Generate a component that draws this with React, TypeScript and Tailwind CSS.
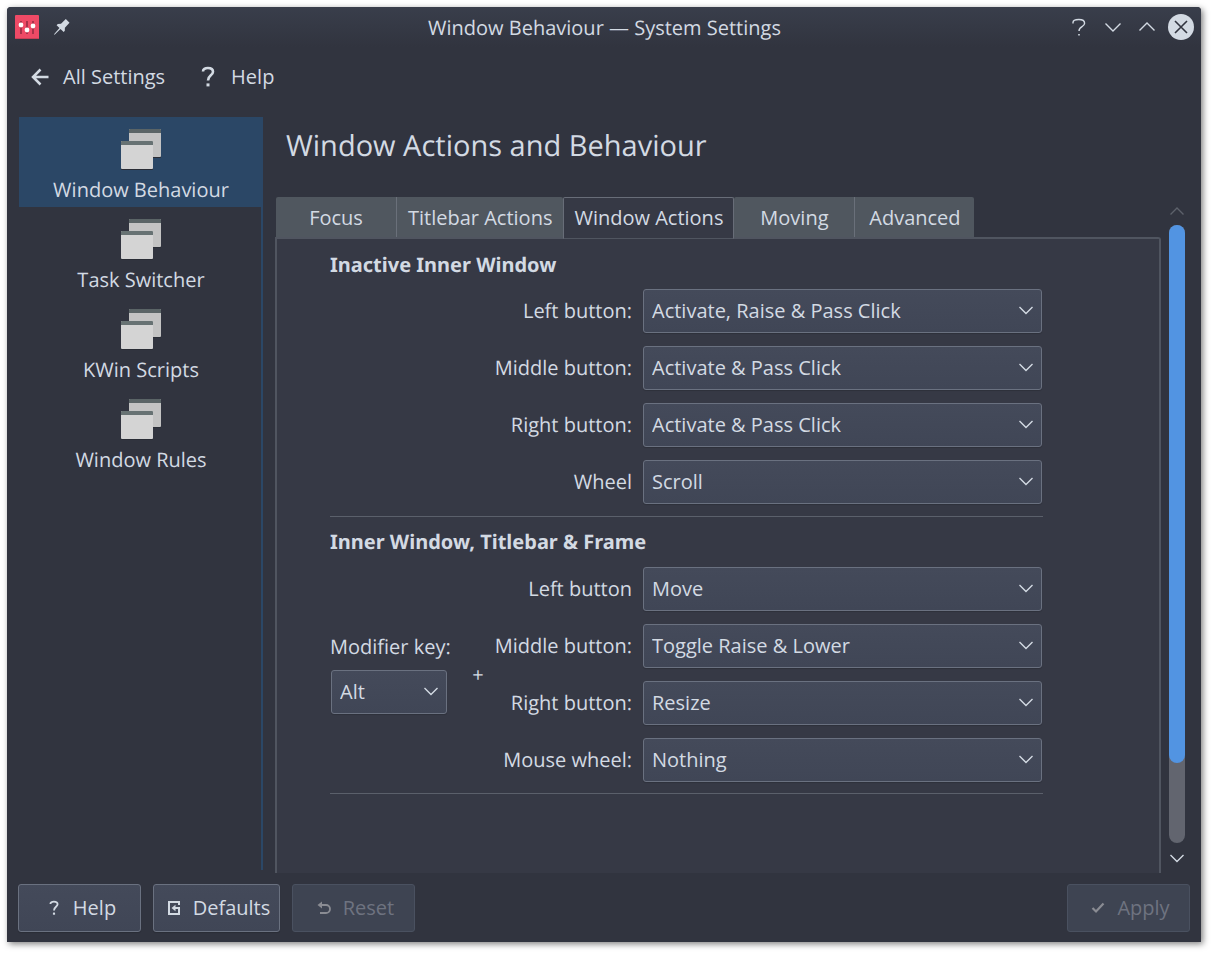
import React, { useId } from "react";

type IconProps = { className?: string };

function AppIcon() {
  return (
    <svg width="24" height="24" viewBox="0 0 24 24" aria-hidden="true">
      <rect width="24" height="24" rx="1" fill="#ee4a66" />
      <rect y="23" width="24" height="1" fill="#c93f57" />
      <g fill="#a8324a">
        <rect x="5" y="6" width="2" height="13" />
        <rect x="11" y="6" width="2" height="13" />
        <rect x="17" y="6" width="2" height="13" />
      </g>
      <g fill="#ffffff">
        <circle cx="6" cy="10" r="2.4" />
        <circle cx="12" cy="15" r="2.4" />
        <circle cx="18" cy="11" r="2.4" />
      </g>
    </svg>
  );
}

function PinIcon() {
  return (
    <svg width="16" height="16" viewBox="0 0 16 16" fill="#d3dae3" aria-hidden="true">
      <path d="M11.8 0 15.5 3.7 10.9 8.8 10.8 11.8 9.7 13 6.5 9.9 0.6 15.8 0 15.2 5.5 9 2.6 6.2 3.8 5 7 4.8Z" />
    </svg>
  );
}

function HelpGlyph({ className }: IconProps) {
  return (
    <svg width="16" height="20" viewBox="0 0 16 20" fill="none" stroke="currentColor" className={className} aria-hidden="true">
      <path d="M2 6.5V5.5C2 3.5 4.3 2.5 7.8 2.5S13.6 3.5 13.6 6.2C13.6 10 8 9.2 8 14" strokeWidth="1.4" />
      <path d="M8 17v1.4" strokeWidth="1.6" />
    </svg>
  );
}

function BoldHelp({ small = false }: { small?: boolean }) {
  return (
    <svg width={small ? 10 : 14} height={small ? 16 : 22} viewBox="0 0 14 22" fill="none" stroke="currentColor" aria-hidden="true">
      <path d="M2 5.4C2 3.2 4 2 6.9 2S12 3.4 12 5.8C12 9.4 7 9.4 7 14.4" strokeWidth="2.6" />
      <path d="M7 17.4v3" strokeWidth="3" />
    </svg>
  );
}

function BackArrow() {
  return (
    <svg width="18" height="18" viewBox="0 0 18 18" fill="none" stroke="currentColor" strokeWidth="2.5" aria-hidden="true">
      <path d="M17.5 9H2.5M9.5 1.5 2 9 9.5 16.5" />
    </svg>
  );
}

function Chevron({ up = false, className }: IconProps & { up?: boolean }) {
  return (
    <svg width="16" height="10" viewBox="0 0 16 10" fill="none" stroke="currentColor" strokeWidth="1.4" className={className} aria-hidden="true">
      <path d={up ? "M0.5 8.5 8 1 15.5 8.5" : "M0.5 1.5 8 9 15.5 1.5"} />
    </svg>
  );
}

function SmallChevron({ up = false, className }: IconProps & { up?: boolean }) {
  return (
    <svg width="14" height="9" viewBox="0 0 14 9" fill="none" stroke="currentColor" strokeWidth="1.4" className={className} aria-hidden="true">
      <path d={up ? "M0.5 7.5 7 1 13.5 7.5" : "M0.5 1 7 7.5 13.5 1"} />
    </svg>
  );
}

function WindowsIcon() {
  return (
    <svg width="40" height="41" viewBox="0 0 40 41" aria-hidden="true">
      <rect x="8" y="1" width="32" height="28" rx="1" fill="#2a2d36" />
      <rect x="8" y="0" width="32" height="28" rx="1" fill="#c3c3c3" />
      <path d="M8 4V1a1 1 0 0 1 1-1h30a1 1 0 0 1 1 1v3z" fill="#5a6466" />
      <rect x="0" y="13" width="32" height="28" rx="1" fill="#2a2d36" />
      <rect x="0" y="12" width="32" height="28" rx="1" fill="#d4d4d4" />
      <path d="M0 16v-3a1 1 0 0 1 1-1h30a1 1 0 0 1 1 1v3z" fill="#677273" />
    </svg>
  );
}

function DefaultsIcon() {
  return (
    <svg width="14" height="16" viewBox="0 0 14 16" fill="none" stroke="currentColor" strokeWidth="2" aria-hidden="true">
      <path d="M12 5V2H2v12h10V8H8" />
      <path d="M4.5 8 8.5 4.8V11.2Z" fill="currentColor" stroke="none" />
    </svg>
  );
}

function ResetIcon() {
  return (
    <svg width="14" height="14" viewBox="0 0 14 14" fill="none" stroke="#8a8c93" strokeWidth="1.8" aria-hidden="true">
      <path d="M3 4H9A4 4 0 0 1 9 12H3" />
      <path d="M0.5 4 5 0.5V7.5Z" fill="#8a8c93" stroke="none" />
    </svg>
  );
}

function CheckIcon() {
  return (
    <svg width="14" height="12" viewBox="0 0 14 12" fill="none" stroke="#8a8c93" strokeWidth="2.2" aria-hidden="true">
      <path d="M1.5 6 5 9.5 12.5 1.5" />
    </svg>
  );
}

function Dropdown({ id, value }: { id: string; value: string }) {
  return (
    <div className="relative w-full">
      <select
        id={id}
        defaultValue={value}
        className="block h-11 w-full appearance-none rounded-[3px] border border-[#6a7180] bg-linear-to-b from-[#444a5a] to-[#404656] pr-9 pl-2 text-xl text-[#d3dae3] shadow-[0_1px_1px_rgba(0,0,0,0.15)]"
      >
        <option>{value}</option>
      </select>
      <SmallChevron className="pointer-events-none absolute top-[17px] right-[9px] text-[#d3dae3]" />
    </div>
  );
}

function Field({ label, value }: { label: string; value: string }) {
  const id = useId();
  return (
    <div className="flex items-center gap-[11px]">
      <label htmlFor={id} className="w-[140px] shrink-0 text-right whitespace-nowrap">
        {label}
      </label>
      <Dropdown id={id} value={value} />
    </div>
  );
}

const sidebarItems = ["Window Behaviour", "Task Switcher", "KWin Scripts", "Window Rules"];
const tabs = ["Focus", "Titlebar Actions", "Window Actions", "Moving", "Advanced"];

const innerFields = [
  ["Left button:", "Activate, Raise & Pass Click"],
  ["Middle button:", "Activate & Pass Click"],
  ["Right button:", "Activate & Pass Click"],
  ["Wheel", "Scroll"],
];

const frameFields = [
  ["Left button", "Move"],
  ["Middle button:", "Toggle Raise & Lower"],
  ["Right button:", "Resize"],
  ["Mouse wheel:", "Nothing"],
];

function TitleBar() {
  return (
    <header className="grid h-10 grid-cols-[1fr_auto_1fr] items-center rounded-t-[4px] bg-linear-to-b from-[#393e4b] to-[#31343f] pr-[7px] pl-2">
      <div className="flex items-center gap-[15px]">
        <AppIcon />
        <button aria-label="Pin window">
          <PinIcon />
        </button>
      </div>
      <span className="pt-0.5">Window Behaviour — System Settings</span>
      <div className="flex items-center justify-end gap-[18px]">
        <button aria-label="Help">
          <HelpGlyph />
        </button>
        <button aria-label="Minimise">
          <Chevron />
        </button>
        <button aria-label="Maximise">
          <Chevron up />
        </button>
        <button aria-label="Close" className="-ml-[5px]">
          <svg width="26" height="26" viewBox="0 0 26 26" aria-hidden="true">
            <circle cx="13" cy="13" r="13" fill="#d3dae3" />
            <path d="M7 7 19 19M19 7 7 19" stroke="#31343f" strokeWidth="1.6" />
          </svg>
        </button>
      </div>
    </header>
  );
}

function Sidebar() {
  return (
    <nav className="mb-[3px] w-[244px] shrink-0 border-r-2 border-[#2b4766]">
      {sidebarItems.map((item, i) => (
        <a
          key={item}
          href="#"
          aria-current={i === 0 ? "page" : undefined}
          className={
            i === 0
              ? "flex h-[90px] flex-col items-center bg-[#2b4766] pt-3 pl-0.5"
              : "flex h-[90px] flex-col items-center pt-3 pl-0.5"
          }
        >
          <WindowsIcon />
          <span className="mt-[6px] leading-7">{item}</span>
        </a>
      ))}
    </nav>
  );
}

function Tabs() {
  return (
    <div role="tablist" className="ml-px flex h-10">
      {tabs.map((tab, i) => {
        const active = i === 2;
        return (
          <button
            key={tab}
            role="tab"
            aria-selected={active}
            className={
              active
                ? "z-10 h-[42px] rounded-t-[2px] border border-[#686d78] border-b-[#505560] bg-[#363945] px-[10px]"
                : i === 0 || i === 3
                  ? "min-w-[121px] rounded-tl-[2px] border-r border-[#6a707a] bg-[#50575f] px-[11px] pt-0.5"
                  : "min-w-[119px] rounded-tr-[2px] bg-[#50575f] px-[11px] pt-0.5"
            }
          >
            {tab}
          </button>
        );
      })}
    </div>
  );
}

function ScrollBar() {
  return (
    <div className="flex w-4 flex-col items-center">
      <button aria-label="Scroll up" className="flex h-7 items-center text-[#5d616b]">
        <SmallChevron up />
      </button>
      <div className="w-4 flex-1 rounded-full bg-[#62656f]">
        <div className="h-[87%] rounded-full bg-[#5294e2]" />
      </div>
      <button aria-label="Scroll down" className="flex h-[30px] items-center">
        <SmallChevron />
      </button>
    </div>
  );
}

const enabledButton =
  "flex h-12 items-center justify-center gap-2 rounded-[3px] border border-[#6a7180] bg-linear-to-b from-[#444a5a] to-[#404656] shadow-[0_1px_1px_rgba(0,0,0,0.15)]";
const disabledButton =
  "flex h-12 items-center justify-center gap-2 rounded-[3px] border border-[#4a5160] bg-[#3e4452] text-[#6e7380]";
const iconBox = "flex w-[22px] justify-center";

export default function App() {
  const modifierId = useId();
  return (
    <div className="min-h-screen bg-white pt-[7px] pr-[13px] pb-[13px] pl-[7px] font-['Open_Sans','Noto_Sans',sans-serif] text-xl text-[#d3dae3] [text-rendering:geometricPrecision]">
      <div className="flex min-h-[calc(100vh-20px)] flex-col rounded-t-[4px] bg-[#31343f] shadow-[2px_2px_6px_rgba(0,0,0,0.5)]">
        <TitleBar />
        <div className="flex h-[60px] items-center pl-6">
          <button className="flex items-center gap-[14px]">
            <BackArrow />
            All Settings
          </button>
          <button className="ml-9 flex items-center gap-4">
            <BoldHelp />
            Help
          </button>
        </div>

        <div className="flex flex-1 gap-3 pt-[10px] pr-4 pl-3">
          <Sidebar />
          <main className="flex min-w-0 flex-1 flex-col">
            <h1 className="flex h-20 items-start pt-[9px] pl-[11px] text-[29px] leading-10">
              Window Actions and Behaviour
            </h1>
            <div className="flex flex-1 gap-2">
              <div className="flex min-w-0 flex-1 flex-col">
                <Tabs />
                <div className="flex-1 rounded-tr-[3px] border-2 border-b-0 border-[#505560] bg-[#363945] pt-3 pr-[116px] pl-[53px]">
                  <section>
                    <h2 className="mb-[10px] font-['Noto_Sans',sans-serif] font-bold">Inactive Inner Window</h2>
                    <div className="flex flex-col gap-[13px] pr-px pl-[162px]">
                      {innerFields.map(([label, value]) => (
                        <Field key={label} label={label} value={value} />
                      ))}
                    </div>
                  </section>
                  <hr className="mt-3 mb-[11px] border-[#5b606b]" />
                  <section>
                    <h2 className="mb-[11px] font-['Noto_Sans',sans-serif] font-bold">
                      Inner Window, Titlebar &amp; Frame
                    </h2>
                    <div className="flex items-center pr-px">
                      <div className="w-[118px] shrink-0 pb-0.5">
                        <label htmlFor={modifierId} className="mb-[9px] block whitespace-nowrap">
                          Modifier key:
                        </label>
                        <div className="px-px">
                          <Dropdown id={modifierId} value="Alt" />
                        </div>
                      </div>
                      <span className="w-[44px] shrink-0 pl-4 text-center">+</span>
                      <div className="flex flex-1 flex-col gap-[13px]">
                        {frameFields.map(([label, value]) => (
                          <Field key={label} label={label} value={value} />
                        ))}
                      </div>
                    </div>
                  </section>
                  <hr className="mt-[11px] mb-3 border-[#5b606b]" />
                </div>
              </div>
              <ScrollBar />
            </div>
          </main>
        </div>

        <footer className="flex gap-3 px-[11px] pt-[11px] pb-[10px]">
          <button className={`${enabledButton} w-[123px]`}>
            <span className={iconBox}>
              <BoldHelp small />
            </span>
            Help
          </button>
          <button className={`${enabledButton} w-[127px]`}>
            <span className={iconBox}>
              <DefaultsIcon />
            </span>
            Defaults
          </button>
          <button disabled className={`${disabledButton} w-[123px]`}>
            <span className={iconBox}>
              <ResetIcon />
            </span>
            Reset
          </button>
          <button disabled className={`${disabledButton} ml-auto w-[123px]`}>
            <span className={iconBox}>
              <CheckIcon />
            </span>
            Apply
          </button>
        </footer>
      </div>
    </div>
  );
}
